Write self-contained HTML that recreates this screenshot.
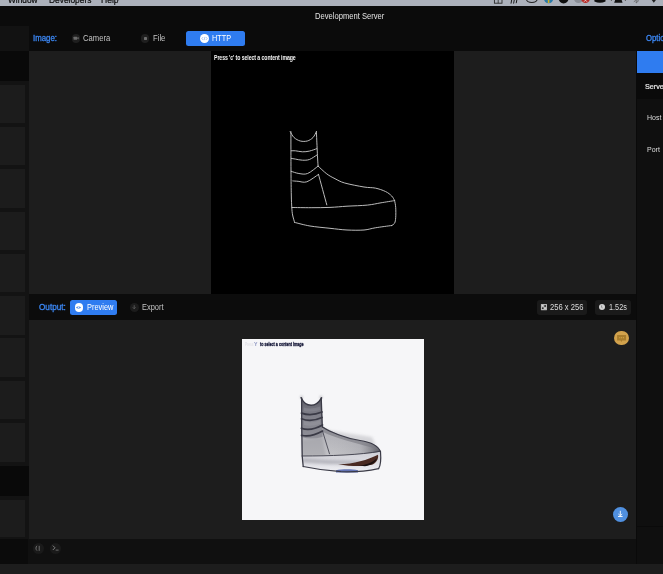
<!DOCTYPE html>
<html><head><meta charset="utf-8">
<style>
*{margin:0;padding:0;box-sizing:border-box}
html,body{width:663px;height:574px;overflow:hidden;background:#0b0b0b;font-family:"Liberation Sans",sans-serif}
.a{position:absolute}
.t{position:absolute;white-space:nowrap;line-height:1;-webkit-font-smoothing:antialiased}
#root{position:absolute;left:0;top:0;width:663px;height:574px;overflow:hidden;will-change:transform}
</style></head><body><div id="root">
<div class="a" style="left:0px;top:0px;width:663px;height:574px;background:#0b0b0b;"></div>
<div class="a" style="left:0px;top:0px;width:663px;height:6px;background:#acb1bb;"></div>
<div class="t" style="left:7.87px;top:-4.28px;font-size:8.6px;color:#0c0c0c;transform:scaleX(0.9680776699029128);transform-origin:0 0;-webkit-text-stroke:0.2px #0c0c0c;">Window</div>
<div class="t" style="left:48.66px;top:-4.28px;font-size:8.6px;color:#0c0c0c;transform:scaleX(0.9754593817397554);transform-origin:0 0;-webkit-text-stroke:0.2px #0c0c0c;">Developers</div>
<div class="t" style="left:100.66px;top:-4.28px;font-size:8.6px;color:#0c0c0c;transform:scaleX(0.995166077738516);transform-origin:0 0;-webkit-text-stroke:0.2px #0c0c0c;">Help</div>
<svg class="a" style="left:470px;top:0" width="193" height="6" viewBox="0 0 193 6"><rect x="24.4" y="-4" width="7.6" height="7.2" fill="none" stroke="#2a2a2a" stroke-width="0.9"/><path d="M28.2,-4 L28.2,3.2" stroke="#2a2a2a" stroke-width="0.8"/><path d="M41,3.6 L42.2,-3 M43.6,3.6 L44.8,-3 M46.2,3.2 L47.4,-3" stroke="#1a1a1a" stroke-width="1"/><ellipse cx="61.8" cy="-1" rx="5.4" ry="3.5" fill="none" stroke="#222" stroke-width="1.1"/><circle cx="78.6" cy="-1.3" r="4.6" fill="#2a7aa8"/><rect x="77.8" y="-4" width="1.6" height="7" fill="#d4b020"/><circle cx="93.6" cy="-1.4" r="4.9" fill="#0e0e0e"/><circle cx="108.5" cy="-1.6" r="4.6" fill="#8a8e96"/><circle cx="115.5" cy="-1.3" r="4.3" fill="#b82a26"/><path d="M114,-1.5 L117,1.8 M117,-1.5 L114,1.8" stroke="#eee" stroke-width="0.7"/><path d="M124.4,-4 L135.5,-4 L135.5,1.5 Q130,4 124.4,1.5 Z" fill="#0e0e0e"/><path d="M146.5,-4 L150.3,-4 L152.6,2.8 L144.2,2.8 Z" fill="#111"/><path d="M141.4,-2 L141.4,1 M155.4,-2 L155.4,1" stroke="#444" stroke-width="0.8"/><path d="M164,-3 L168.5,0.8 L166.2,3 L166.2,-4 M163.8,1.8 L165.6,0.4" stroke="#555" stroke-width="0.75" fill="none"/><path d="M181,-1 L186.7,-1 L183.8,2.8 Z" fill="#222"/></svg>
<div class="t" style="left:314.50px;top:12.27px;font-size:8.3px;color:#e4e4e4;transform:scaleX(0.9159231563726502);transform-origin:0 0;">Development Server</div>
<div class="t" style="left:32.69px;top:33.89px;font-size:8.4px;color:#3c88f6;transform:scaleX(0.9366882245271507);transform-origin:0 0;-webkit-text-stroke:0.3px #3c88f6;">Image:</div>
<div class="a" style="left:71.75px;top:34.05px;width:8.6px;height:8.6px;border-radius:50%;background:#1f1f1f;"></div>
<svg class="a" style="left:72px;top:35px" width="8" height="6" viewBox="72 35 8 6"><rect x="73.5" y="36.8" width="3.7" height="2.9" rx="0.4" fill="#6a6a6a"/><path d="M76.9,38.25 L78.7,36.9 L78.7,39.6 Z" fill="#6a6a6a"/></svg>
<div class="t" style="left:82.89px;top:33.97px;font-size:8.3px;color:#c4c4c4;transform:scaleX(0.920902064584436);transform-origin:0 0;">Camera</div>
<div class="a" style="left:140.90px;top:34.10px;width:8.6px;height:8.6px;border-radius:50%;background:#1f1f1f;"></div>
<div class="a" style="left:143.5px;top:36.8px;width:3.5px;height:3.1px;background:#6e6e6e;border-radius:0.4px"></div>
<div class="t" style="left:152.89px;top:33.97px;font-size:8.3px;color:#c4c4c4;transform:scaleX(0.925682242990655);transform-origin:0 0;">File</div>
<div class="a" style="left:186.1px;top:30.9px;width:58.9px;height:15.1px;background:#2f7cf0;border-radius:2.5px"></div>
<div class="a" style="left:199.90px;top:34.40px;width:8.8px;height:8.8px;border-radius:50%;background:#fff;"></div>
<svg class="a" style="left:201px;top:36.3px" width="7" height="5" viewBox="0 0 7 5"><path d="M2.2,1 L0.8,2.5 L2.2,4 M4.8,1 L6.2,2.5 L4.8,4 M3.9,0.8 L3.1,4.2" fill="none" stroke="#6a9ae8" stroke-width="0.55"/></svg>
<div class="t" style="left:211.91px;top:33.57px;font-size:8.3px;color:#ffffff;transform:scaleX(0.8758356164383564);transform-origin:0 0;">HTTP</div>
<div class="t" style="left:646.20px;top:33.57px;font-size:8.3px;color:#3c88f6;transform:scaleX(0.93);transform-origin:0 0;-webkit-text-stroke:0.3px #3c88f6;">Options</div>
<div class="a" style="left:0px;top:26px;width:29px;height:25px;background:#121212;"></div>
<div class="a" style="left:0px;top:51px;width:29px;height:488.3px;background:#131313;"></div>
<div class="a" style="left:0px;top:51px;width:29px;height:29.5px;background:#090909;"></div>
<div class="a" style="left:0px;top:84.6px;width:25.2px;height:38.5px;background:#1c1c1c;"></div>
<div class="a" style="left:0px;top:126.9px;width:25.2px;height:38.5px;background:#1c1c1c;"></div>
<div class="a" style="left:0px;top:169.2px;width:25.2px;height:38.5px;background:#1c1c1c;"></div>
<div class="a" style="left:0px;top:211.5px;width:25.2px;height:38.5px;background:#1c1c1c;"></div>
<div class="a" style="left:0px;top:253.8px;width:25.2px;height:38.5px;background:#1c1c1c;"></div>
<div class="a" style="left:0px;top:296.1px;width:25.2px;height:38.5px;background:#1c1c1c;"></div>
<div class="a" style="left:0px;top:338.4px;width:25.2px;height:38.5px;background:#1c1c1c;"></div>
<div class="a" style="left:0px;top:380.7px;width:25.2px;height:38.5px;background:#1c1c1c;"></div>
<div class="a" style="left:0px;top:423.0px;width:25.2px;height:38.5px;background:#1c1c1c;"></div>
<div class="a" style="left:0px;top:465.5px;width:29px;height:30px;background:#090909;"></div>
<div class="a" style="left:0px;top:499.7px;width:25.2px;height:37.7px;background:#1c1c1c;"></div>
<div class="a" style="left:29.3px;top:51px;width:607px;height:243.3px;background:#1d1d1d;"></div>
<div class="a" style="left:211.3px;top:51px;width:243px;height:243.3px;background:#000;"></div>
<svg class="a" style="left:0;top:0" width="663" height="574" viewBox="0 0 663 574"><g fill="none" stroke="#c4c4c4" stroke-width="0.95" stroke-linecap="round" stroke-linejoin="round"><path d="M290.20,131.60 C290.83,132.58 292.32,135.93 294.00,137.50 C295.68,139.07 298.08,140.42 300.30,141.00 C302.52,141.58 305.18,141.58 307.30,141.00 C309.42,140.42 311.48,139.07 313.00,137.50 C314.52,135.93 315.83,132.58 316.40,131.60"/><path d="M290.90,131.60 C290.92,138.17 290.93,160.43 291.00,171.00 C291.07,181.57 291.17,188.92 291.30,195.00 C291.43,201.08 291.58,204.17 291.80,207.50 C292.02,210.83 292.13,212.52 292.60,215.00 C293.07,217.48 294.27,221.17 294.60,222.40"/><path d="M316.40,131.60 C316.53,134.67 316.98,145.27 317.20,150.00 C317.42,154.73 317.55,157.32 317.70,160.00 C317.85,162.68 318.03,165.08 318.10,166.10"/><path d="M291.30,150.80 C292.00,150.80 293.65,150.63 295.50,150.80 C297.35,150.97 300.08,151.75 302.40,151.80 C304.72,151.85 307.02,151.62 309.40,151.10 C311.78,150.58 315.48,149.10 316.70,148.70"/><path d="M291.30,158.40 C292.00,158.52 293.65,158.80 295.50,159.10 C297.35,159.40 300.08,160.13 302.40,160.20 C304.72,160.27 306.98,160.37 309.40,159.50 C311.82,158.63 315.65,155.75 316.90,155.00"/><path d="M291.10,171.30 C292.40,171.67 296.15,173.13 298.90,173.50 C301.65,173.87 304.40,174.73 307.60,173.50 C310.80,172.27 316.35,167.33 318.10,166.10"/><path d="M292.80,180.90 C293.68,180.97 295.77,181.15 298.10,181.30 C300.43,181.45 303.40,182.95 306.80,181.80 C310.20,180.65 316.55,175.63 318.50,174.40"/><path d="M318.10,166.10 C319.55,167.40 323.98,171.80 326.80,173.90 C329.62,176.00 332.02,177.18 335.00,178.70 C337.98,180.22 339.87,181.62 344.70,183.00 C349.53,184.38 358.90,186.15 364.00,187.00 C369.10,187.85 371.72,187.35 375.30,188.10 C378.88,188.85 382.77,190.18 385.50,191.50 C388.23,192.82 390.18,194.48 391.70,196.00 C393.22,197.52 394.12,199.83 394.60,200.60"/><path d="M318.50,174.40 C319.88,179.48 325.42,199.82 326.80,204.90"/><path d="M291.80,207.50 C295.02,207.53 304.73,207.72 311.10,207.70 C317.47,207.68 324.02,207.65 330.00,207.40 C335.98,207.15 340.77,206.58 347.00,206.20 C353.23,205.82 361.73,205.67 367.40,205.10 C373.07,204.53 376.47,203.55 381.00,202.80 C385.53,202.05 392.33,200.97 394.60,200.60"/><path d="M394.60,200.60 C394.78,201.73 395.52,204.57 395.70,207.40 C395.88,210.23 395.88,214.97 395.70,217.60 C395.52,220.23 395.27,221.88 394.60,223.20 C393.93,224.52 392.18,225.12 391.70,225.50"/><path d="M294.60,222.40 C297.17,223.00 304.10,225.02 310.00,226.00 C315.90,226.98 323.83,227.63 330.00,228.30 C336.17,228.97 341.33,229.72 347.00,230.00 C352.67,230.28 359.28,230.37 364.00,230.00 C368.72,229.63 370.68,228.55 375.30,227.80 C379.92,227.05 388.97,225.88 391.70,225.50"/></g></svg>
<div class="t" style="left:213.60px;top:54.03px;font-size:7.4px;font-weight:bold;color:#f4f4f4;transform:scaleX(0.7);transform-origin:0 0;letter-spacing:-0.1px;">Press 'c' to select a content image</div>
<div class="a" style="left:29.3px;top:294.3px;width:607px;height:25.3px;background:#0c0c0c;"></div>
<div class="t" style="left:38.87px;top:302.79px;font-size:8.4px;color:#3c88f6;transform:scaleX(0.975217292377702);transform-origin:0 0;-webkit-text-stroke:0.3px #3c88f6;">Output:</div>
<div class="a" style="left:70.1px;top:300.3px;width:46.9px;height:14.3px;background:#2f7cf0;border-radius:2.5px"></div>
<div class="a" style="left:74.50px;top:303.20px;width:8.8px;height:8.8px;border-radius:50%;background:#fff;"></div>
<svg class="a" style="left:75.4px;top:305.1px" width="7" height="5" viewBox="0 0 7 5"><path d="M0.8,2.5 C2,1 5,1 6.2,2.5 C5,4 2,4 0.8,2.5 Z" fill="#5a92ea"/><circle cx="3.5" cy="2.5" r="0.7" fill="#dfe9fb"/></svg>
<div class="t" style="left:86.80px;top:302.77px;font-size:8.3px;color:#ffffff;transform:scaleX(0.8937977766013767);transform-origin:0 0;">Preview</div>
<div class="a" style="left:129.60px;top:302.85px;width:9.2px;height:9.2px;border-radius:50%;background:#1c1c1c;"></div>
<svg class="a" style="left:131px;top:304px" width="7" height="7" viewBox="0 0 7 7"><path d="M3.2,1.2 L3.2,4.6 M1.8,3.4 L3.2,4.8 L4.6,3.4" fill="none" stroke="#5a5a5a" stroke-width="0.9"/></svg>
<div class="t" style="left:141.90px;top:302.77px;font-size:8.3px;color:#c4c4c4;transform:scaleX(0.8997941368078176);transform-origin:0 0;">Export</div>
<div class="a" style="left:537.3px;top:299.8px;width:49.3px;height:14.8px;background:#1a1a1a;border-radius:3px"></div>
<svg class="a" style="left:540px;top:303px" width="8" height="8" viewBox="540 303 8 8"><rect x="540.9" y="303.9" width="6.1" height="6.3" rx="0.4" fill="#b4b4b4"/><circle cx="545.1" cy="306" r="0.9" fill="#1a1a1a"/><circle cx="542.8" cy="308.2" r="0.9" fill="#2a2a2a"/><circle cx="542.5" cy="305.6" r="0.6" fill="#e0e0e0"/><circle cx="545" cy="308.4" r="0.6" fill="#e0e0e0"/></svg>
<div class="t" style="left:549.90px;top:303.32px;font-size:8.3px;color:#dcdcdc;transform:scaleX(0.915723960565794);transform-origin:0 0;">256 x 256</div>
<div class="a" style="left:595px;top:299.8px;width:35.8px;height:14.8px;background:#1a1a1a;border-radius:3px"></div>
<div class="a" style="left:598.85px;top:304.05px;width:6px;height:6px;border-radius:50%;background:#d4d4d4;"></div>
<svg class="a" style="left:598px;top:303px" width="8" height="8" viewBox="598 303 8 8"><path d="M601.6,305.4 L601.6,307.4 L602.6,307.9" stroke="#707070" stroke-width="0.7" fill="none"/></svg>
<div class="t" style="left:608.71px;top:303.32px;font-size:8.3px;color:#dcdcdc;transform:scaleX(0.8809730561970724);transform-origin:0 0;">1.52s</div>
<div class="a" style="left:29.3px;top:319.6px;width:607px;height:219.7px;background:#1d1d1d;"></div>
<div class="a" style="left:241.7px;top:338.7px;width:182px;height:181.7px;background:#f6f6f8;"></div>
<svg class="a" style="left:0;top:0" width="663" height="574" viewBox="0 0 663 574">
<defs>
<linearGradient id="gs" x1="0" y1="0" x2="0" y2="1">
<stop offset="0" stop-color="#5a5a64"/><stop offset="0.4" stop-color="#7e7e88"/><stop offset="1" stop-color="#909098"/>
</linearGradient>
<linearGradient id="gb" x1="0" y1="0" x2="0" y2="1">
<stop offset="0" stop-color="#a2a2a8"/><stop offset="0.6" stop-color="#b2b2b8"/><stop offset="1" stop-color="#c4c4c8"/>
</linearGradient>
<linearGradient id="gt" x1="0" y1="0" x2="1" y2="0">
<stop offset="0" stop-color="#b4b4b8" stop-opacity="0"/><stop offset="0.65" stop-color="#8a8a92" stop-opacity="0.25"/><stop offset="1" stop-color="#4a4a52" stop-opacity="0.9"/>
</linearGradient>
<linearGradient id="gsole" x1="0" y1="0" x2="0" y2="1">
<stop offset="0" stop-color="#d0d0d6"/><stop offset="0.5" stop-color="#dcdce2"/><stop offset="1" stop-color="#f0f0f4"/>
</linearGradient>
<filter id="bl" x="-50%" y="-50%" width="200%" height="200%"><feGaussianBlur stdDeviation="1.5"/></filter>
<filter id="bl2" x="-50%" y="-50%" width="200%" height="200%"><feGaussianBlur stdDeviation="0.45"/></filter>
<filter id="bl3" x="-50%" y="-50%" width="200%" height="200%"><feGaussianBlur stdDeviation="0.8"/></filter>
</defs>
<path d="M318,428 C334,432 356,434 372,437 L376,446 C362,441 345,440 326,436 Z" fill="#d2d2d6" filter="url(#bl)" opacity="0.9"/>
<circle cx="301.5" cy="397" r="1.6" fill="#c8c8cc" filter="url(#bl3)"/>
<circle cx="321" cy="397" r="1.6" fill="#c8c8cc" filter="url(#bl3)"/>
<path d="M301.1,397.8 C304,404 307,405.3 311.1,405.3 C315,405.3 318.5,403 321.6,397.8 L322.5,427 C330,432 345,438 360,440.5 C370,442 378,445 380.5,451.7 L380.5,454 C360,455 330,456 302,456 L301.5,430 Z" fill="url(#gb)"/>
<path d="M322.5,424 C330,430 345,437 360,440 C370,442 378,445 380.5,451.7 L380.5,454 C360,455 340,456 326,456 Z" fill="url(#gt)"/>
<path d="M301.1,397.8 C304,404 307,405.3 311.1,405.3 C315,405.3 318.5,403 321.6,397.8 L322.5,428 L322.5,437 Q311,440 301.3,437 Z" fill="url(#gs)"/>
<path d="M304,421 Q311,424 320,420 L320,424 Q311,427 304,425 Z" fill="#a4a4ac" opacity="0.35"/>
<path d="M304,407.5 Q311,410 320,406.5 L320,410 Q311,412.5 304,411 Z" fill="#9c9ca4" opacity="0.3"/>
<path d="M302,440 L322,437 L326,456 L302,456 Z" fill="#9c9ca2" opacity="0.5" filter="url(#bl3)"/>
<path d="M322.5,426 C330,431 345,438 360,441 C370,443 376,446 379,450 L370,447 C355,443 335,438 323,432 Z" fill="#7a7a82" opacity="0.6" filter="url(#bl2)"/>
<path d="M302,456 C330,456 360,455 380.5,451.7 C381,458 381,465 378.6,468.6 C365,471.5 350,472 341,471.7 C330,471 315,469 303.2,466.5 Z" fill="url(#gsole)"/>
<path d="M303,458 C320,459.5 335,460.5 360,461 L360,464.5 C335,464.5 318,463.5 303,462.5 Z" fill="#a8a8b0" opacity="0.75" filter="url(#bl)"/>
<path d="M338,464.2 C352,464.5 368,460 378,454.8 C378.8,459 376.5,462.8 372,464.8 C362,467 350,466.2 338,464.2 Z" fill="#4a2a22"/>
<path d="M358,465.6 C366,465.2 372,462.5 377,458.2 C375.5,462.5 371.5,465 365,466.2 Z" fill="#1a1010"/>
<path d="M336,470.2 C342,468.8 352,468.8 358,470.2 L358,472.6 L336,472.6 Z" fill="#6272b4" filter="url(#bl2)"/>
<g fill="none" stroke="#3a3a46" stroke-linecap="round">
<path d="M301.1,397.8 C304,404 307,405.3 311.1,405.3 C315,405.3 318.5,403 321.6,397.8" stroke-width="1.5"/>
<path d="M301.6,397.8 L301.8,430 L302.2,456 L303.2,466.5" stroke-width="1.3"/>
<path d="M321.2,397.8 L322.3,427" stroke-width="1.3"/>
<path d="M301.5,413.1 Q311,416.5 322,412" stroke-width="1.8"/>
<path d="M301.5,418.8 Q311,422.5 322,417.5" stroke-width="1.7"/>
<path d="M301.5,428.3 Q311,431.5 322.5,425" stroke-width="1.8"/>
<path d="M301.5,435.3 Q311,437.5 322.5,431" stroke-width="1.6"/>
<path d="M322.5,427 C330,432 345,438 360,440.5 C370,442 378,445 380.5,451.7" stroke-width="1.2"/>
<path d="M322.5,431 L329.5,453.8" stroke-width="0.8"/>
<path d="M302,456 C330,456 360,455 380.5,451.2" stroke-width="0.9"/>
<path d="M380.5,451.7 C381,458 381,465 378.6,468.6" stroke-width="1.2"/>
<path d="M303.2,466.5 C315,469 330,471 341,471.7 C350,472 365,471.5 378.6,468.6" stroke-width="1.2"/>
</g></svg>
<div class="t" style="left:245.20px;top:341.66px;font-size:5.6px;font-weight:bold;color:#e2e2e8;transform:scaleX(0.56);transform-origin:0 0;">Press</div>
<div class="t" style="left:254.40px;top:341.69px;font-size:5.8px;font-weight:bold;color:#8c94c0;transform:scaleX(0.9);transform-origin:0 0;">Y</div>
<div class="t" style="left:260.20px;top:341.89px;font-size:5.8px;font-weight:bold;color:#1a1c3c;transform:scaleX(0.63);transform-origin:0 0;-webkit-text-stroke:0.35px #1a1c3c;">to select a content image</div>
<div class="a" style="left:614.45px;top:330.55px;width:14.3px;height:14.3px;border-radius:50%;background:#d2a24c;"></div>
<svg class="a" style="left:616px;top:333px" width="12" height="10" viewBox="0 0 12 10"><path d="M1.1,2 L10.1,2 L10.1,7.4 L6.2,7.4 L5.4,9 L4.6,7.4 L1.1,7.4 Z" fill="#a87c2c"/><circle cx="3.8" cy="4.7" r="0.6" fill="#d2a448"/><circle cx="5.6" cy="4.7" r="0.6" fill="#d2a448"/><circle cx="7.4" cy="4.7" r="0.6" fill="#d2a448"/></svg>
<div class="a" style="left:612.80px;top:506.90px;width:15px;height:15px;border-radius:50%;background:#5090e0;"></div>
<svg class="a" style="left:616px;top:509px" width="9" height="9" viewBox="0 0 9 9"><path d="M4.3,1.8 L4.3,6.6 M2.4,5 L4.3,6.8 L6.2,5 M2,7.5 L6.6,7.5" fill="none" stroke="#fff" stroke-width="0.9"/></svg>
<div class="a" style="left:636px;top:51px;width:27px;height:488.3px;background:#0f0f0f;"></div>
<div class="a" style="left:636px;top:51px;width:1.2px;height:488.3px;background:#0a0a0a;"></div>
<div class="a" style="left:637.1px;top:51.1px;width:25.9px;height:21.5px;background:#2f7cf0;"></div>
<div class="a" style="left:636px;top:72.6px;width:27px;height:26px;background:#0a0a0a;"></div>
<div class="t" style="left:644.70px;top:82.87px;font-size:7.6px;color:#ececec;transform:scaleX(0.95);transform-origin:0 0;-webkit-text-stroke:0.2px #ececec;">Server</div>
<div class="t" style="left:646.80px;top:113.53px;font-size:7.4px;color:#dcdcdc;transform:scaleX(0.95);transform-origin:0 0;">Host</div>
<div class="t" style="left:646.80px;top:146.03px;font-size:7.4px;color:#dcdcdc;transform:scaleX(0.95);transform-origin:0 0;">Port</div>
<div class="a" style="left:636.4px;top:526px;width:26.6px;height:1px;background:#0a0a0a;"></div>
<div class="a" style="left:0px;top:539.3px;width:663px;height:24.4px;background:#101010;"></div>
<div class="a" style="left:0px;top:539.3px;width:28px;height:24.4px;background:#0b0b0b;"></div>
<div class="a" style="left:636px;top:526px;width:27px;height:37.7px;background:#0f0f0f;"></div>
<div class="a" style="left:636px;top:526px;width:1.2px;height:37.7px;background:#0a0a0a;"></div>
<div class="a" style="left:636px;top:526px;width:27px;height:1px;background:#0a0a0a;"></div>
<div class="a" style="left:32.80px;top:542.60px;width:11.2px;height:11.2px;border-radius:50%;background:#1a1a1a;"></div>
<svg class="a" style="left:34px;top:544px" width="9" height="9" viewBox="0 0 9 9"><path d="M3,1.8 C1.6,3 1.6,5.4 3,6.6 M5.2,1.8 L5.2,6.8" fill="none" stroke="#7a7a7a" stroke-width="0.9"/></svg>
<div class="a" style="left:50.10px;top:542.60px;width:11.2px;height:11.2px;border-radius:50%;background:#1a1a1a;"></div>
<svg class="a" style="left:51px;top:544px" width="10" height="9" viewBox="0 0 10 9"><path d="M1.8,1.6 L4,3.8 L1.8,6" fill="none" stroke="#8a8a8a" stroke-width="0.9"/><rect x="4.6" y="5.6" width="3" height="1" fill="#6a6a6a"/></svg>
<div class="a" style="left:0px;top:563.7px;width:663px;height:10.3px;background:#1d1d1d;"></div>
</div></body></html>
